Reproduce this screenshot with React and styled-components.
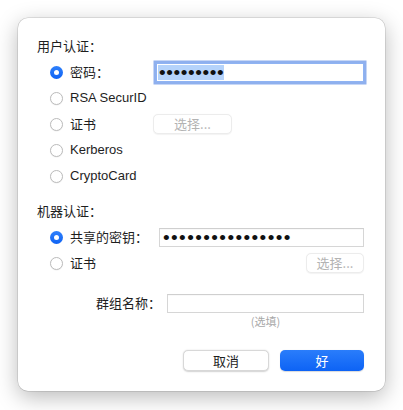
import React from "react";
import styled, { createGlobalStyle } from "styled-components";

const Global = createGlobalStyle`
  html, body { margin: 0; padding: 0; background: #ffffff; }
  body {
    font-family: "Liberation Sans", "Noto Sans CJK SC", sans-serif;
    font-size: 13px;
    color: #222;
    -webkit-font-smoothing: antialiased;
  }
`;

const Page = styled.div`
  width: 403px;
  height: 410px;
  padding: 18px 18px 0 18px;
  box-sizing: border-box;
`;

const Dialog = styled.div`
  width: 367px;
  height: 373px;
  box-sizing: border-box;
  background: #fff;
  border-radius: 10px;
  box-shadow: 0 0 0 0.5px rgba(0, 0, 0, 0.18), 0 6px 22px rgba(0, 0, 0, 0.28);
  padding: 20px 21px 0 19px;
  display: flex;
  flex-direction: column;
`;

const Heading = styled.div`
  height: 16px;
  line-height: 16px;
  font-family: "Noto Sans CJK SC", sans-serif;
  font-size: 13px;
  color: #1e1e1e;
  margin-top: ${(p) => p.$mt || 0}px;
`;

const Grid = styled.div`
  display: grid;
  grid-template-columns: ${(p) => p.$col}px 1fr;
  grid-auto-rows: 20px;
  row-gap: 6px;
  padding-left: 13px;
  margin-top: ${(p) => p.$mt}px;
  align-items: center;
`;

const Option = styled.label`
  display: flex;
  align-items: center;
  gap: 7px;
  height: 20px;
  white-space: nowrap;
`;

const Radio = styled.span`
  width: 13px;
  height: 13px;
  border-radius: 50%;
  box-sizing: border-box;
  flex: none;
  display: flex;
  align-items: center;
  justify-content: center;
  background: ${(p) => (p.$checked ? "linear-gradient(#2f80fb, #0f63f4)" : "#fff")};
  border: ${(p) => (p.$checked ? "none" : "1px solid #bcbcbc")};
  box-shadow: ${(p) => (p.$checked ? "none" : "0 0.5px 1px rgba(0,0,0,0.08)")};
  &::after {
    content: "";
    display: ${(p) => (p.$checked ? "block" : "none")};
    width: 5px;
    height: 5px;
    border-radius: 50%;
    background: #fff;
  }
`;

const Label = styled.span`
  font-family: ${(p) =>
    p.$latin ? '"Liberation Sans", sans-serif' : '"Noto Sans CJK SC", sans-serif'};
  font-size: 13px;
  line-height: 16px;
  color: #1e1e1e;
`;

const Field = styled.div`
  height: 19px;
  box-sizing: border-box;
  background: #fff;
  border: 1px solid ${(p) => (p.$focus ? "#8fb3f3" : "#d6d6d6")};
  border-top-color: ${(p) => (p.$focus ? "#8fb3f3" : "#cfcfcf")};
  box-shadow: ${(p) =>
    p.$focus ? "0 0 0 2.5px #8fb0ee" : "inset 0 0.5px 0 rgba(0,0,0,0.05)"};
  display: flex;
  align-items: center;
  padding-left: ${(p) => (p.$focus ? 1 : 3)}px;
  overflow: hidden;
`;

const Dots = styled.span`
  font-family: "Liberation Sans", sans-serif;
  font-size: 19px;
  line-height: 15px;
  height: 15px;
  letter-spacing: ${(p) => p.$ls}px;
  color: #111;
  background: ${(p) => (p.$selected ? "#b5d3fb" : "transparent")};
  padding: 0 0 0 ${(p) => (p.$selected ? 1 : 0)}px;
  display: inline-flex;
  align-items: center;
`;

const SmallButton = styled.button`
  height: 20px;
  width: ${(p) => p.$w}px;
  box-sizing: border-box;
  border: 1px solid #ececec;
  border-radius: 5px;
  background: #fff;
  box-shadow: 0 0.5px 1px rgba(0, 0, 0, 0.05);
  color: #b3b3b3;
  font-family: "Noto Sans CJK SC", sans-serif;
  font-size: 13px;
  line-height: 16px;
  padding: 0;
  justify-self: ${(p) => p.$justify || "start"};
  margin-left: ${(p) => p.$ml || 0}px;
`;

const GroupRow = styled.div`
  display: grid;
  grid-template-columns: 124px 1fr;
  column-gap: 6px;
  align-items: center;
  margin-top: 20px;
  height: 20px;
`;

const RightLabel = styled.span`
  text-align: right;
  font-family: "Noto Sans CJK SC", sans-serif;
  font-size: 13px;
  line-height: 16px;
  color: #1e1e1e;
`;

const Hint = styled.div`
  margin-left: 130px;
  text-align: center;
  font-family: "Noto Sans CJK SC", sans-serif;
  font-size: 11px;
  line-height: 14px;
  color: #a8a8a8;
  margin-top: 1px;
`;

const Footer = styled.div`
  display: flex;
  justify-content: flex-end;
  gap: 11px;
  margin-top: 22px;
`;

const PushButton = styled.button`
  width: ${(p) => p.$w}px;
  height: 21px;
  box-sizing: border-box;
  border-radius: 5px;
  padding: 0;
  font-family: "Noto Sans CJK SC", sans-serif;
  font-size: 13px;
  line-height: 16px;
  border: ${(p) => (p.$primary ? "none" : "0.5px solid #d8d8d8")};
  background: ${(p) => (p.$primary ? "linear-gradient(#2a7dfb, #0d63f5)" : "#fff")};
  color: ${(p) => (p.$primary ? "#fff" : "#1e1e1e")};
  box-shadow: ${(p) =>
    p.$primary
      ? "0 0.5px 1px rgba(0,0,0,0.15)"
      : "0 0.5px 1.5px rgba(0,0,0,0.18)"};
`;

const Spacer = styled.span``;

export default function App() {
  return (
    <>
      <Global />
      <Page>
        <Dialog>
          <Heading>用户认证：</Heading>
          <Grid $col={106} $mt={8}>
            <Option>
              <Radio $checked />
              <Label>密码：</Label>
            </Option>
            <Field $focus>
              <Dots $selected $ls={0.6}>•••••••••</Dots>
            </Field>
            <Option>
              <Radio />
              <Label $latin>RSA SecurID</Label>
            </Option>
            <Spacer />
            <Option>
              <Radio />
              <Label>证书</Label>
            </Option>
            <SmallButton $w={79} $ml={-3}>选择...</SmallButton>
            <Option>
              <Radio />
              <Label $latin>Kerberos</Label>
            </Option>
            <Spacer />
            <Option>
              <Radio />
              <Label $latin>CryptoCard</Label>
            </Option>
            <Spacer />
          </Grid>

          <Heading $mt={17}>机器认证：</Heading>
          <Grid $col={109} $mt={8}>
            <Option>
              <Radio $checked />
              <Label>共享的密钥：</Label>
            </Option>
            <Field>
              <Dots $ls={1.4}>••••••••••••••••</Dots>
            </Field>
            <Option>
              <Radio />
              <Label>证书</Label>
            </Option>
            <SmallButton $w={58} $justify="end">选择...</SmallButton>
          </Grid>

          <GroupRow>
            <RightLabel>群组名称：</RightLabel>
            <Field />
          </GroupRow>
          <Hint>(选填)</Hint>

          <Footer>
            <PushButton $w={86}>取消</PushButton>
            <PushButton $w={84} $primary>好</PushButton>
          </Footer>
        </Dialog>
      </Page>
    </>
  );
}
